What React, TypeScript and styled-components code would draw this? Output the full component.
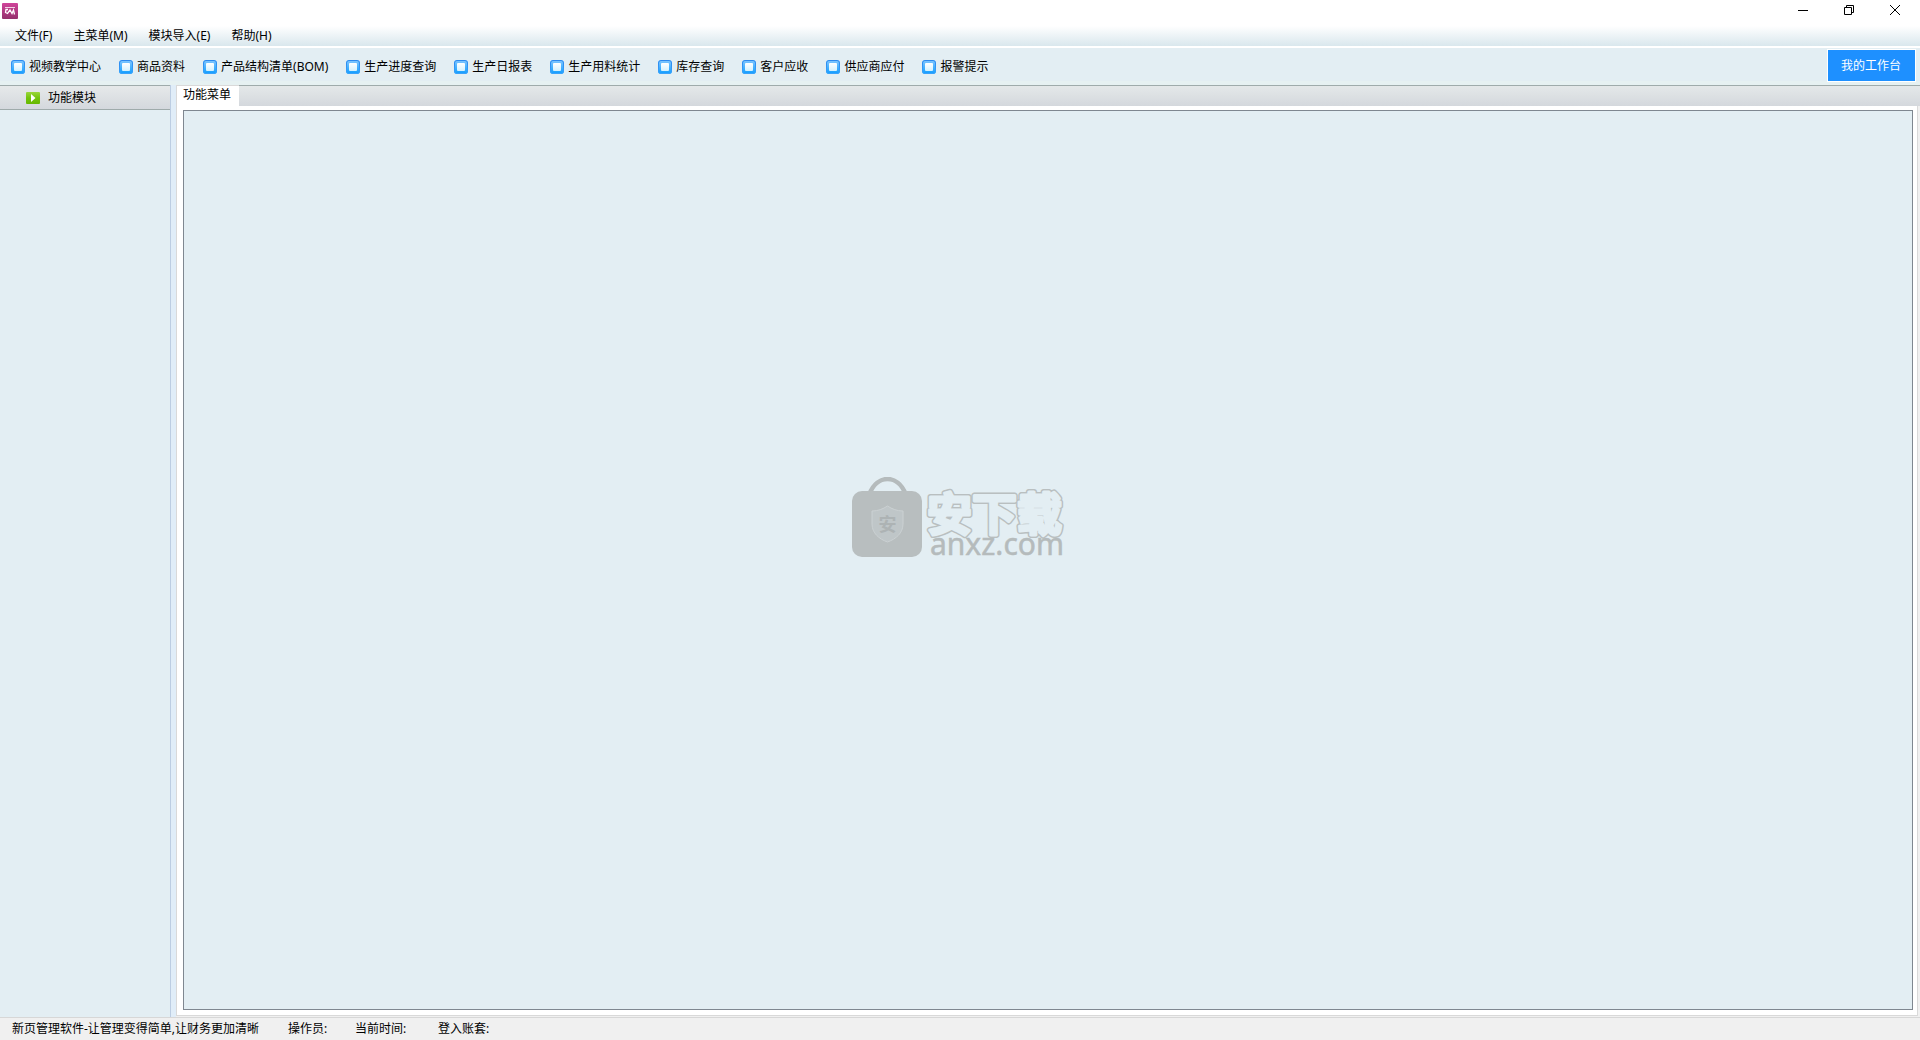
import React from "react";
import styled, { createGlobalStyle } from "styled-components";

const Global = createGlobalStyle`
  * { box-sizing: border-box; }
  body {
    margin: 0;
    background: #f0f0f0;
    color: #000;
    font-family: "Noto Sans", "Noto Sans CJK SC", sans-serif;
    font-size: 12px;
    line-height: 16px;
  }
  button { font: inherit; color: inherit; border: 0; padding: 0; background: none; cursor: default; }
`;

const Shell = styled.div`
  display: flex;
  flex-direction: column;
  height: 100vh;
`;

const TitleBar = styled.header`
  display: flex;
  justify-content: space-between;
  height: 26px;
  padding: 0 2px;
  background: #fff;
`;

const Logo = styled.svg`
  width: 16px;
  height: 16px;
  margin-top: 3px;
`;

const WindowButtons = styled.div`
  display: flex;
`;

const WindowButton = styled.button`
  display: flex;
  align-items: center;
  justify-content: center;
  width: 46px;
  height: 20px;
`;

const MenuBar = styled.nav`
  display: flex;
  align-items: center;
  gap: 21px;
  height: 20px;
  padding: 0 15px;
  background: linear-gradient(#fff, #d9e7ed);
`;

const MenuItem = styled.button`
  white-space: nowrap;
`;

const Toolbar = styled.div`
  display: flex;
  align-items: center;
  justify-content: space-between;
  height: 39px;
  padding: 1px 4px 0 11px;
  border-top: 2px solid #fff;
  background: linear-gradient(#e3eef3 88%, #e6f1f2 88%);
`;

const ToolList = styled.div`
  display: flex;
  gap: 18px;
`;

const Tool = styled.button`
  display: flex;
  align-items: center;
  gap: 4px;
  white-space: nowrap;
`;

const WorkbenchButton = styled.button`
  align-self: flex-start;
  height: 33px;
  padding: 0 14px 0 13px;
  border: 1px solid #fff;
  background: #1e90ff;
  color: #fff;
`;

const Body = styled.div`
  display: flex;
  flex: 1;
  min-height: 0;
`;

const Sidebar = styled.aside`
  width: 170px;
  background: #e3eef3;
`;

const ModuleHeader = styled.button`
  display: flex;
  align-items: center;
  gap: 8px;
  width: 100%;
  height: 25px;
  padding-left: 26px;
  border-top: 1px solid #9fabab;
  border-bottom: 1px solid #9fabab;
  background: linear-gradient(#e6e9ea, #d4d8dd);
`;

const Splitter = styled.div`
  width: 6px;
  border-left: 1px solid #bccde2;
  background: #e0edf8;
`;

const Workspace = styled.main`
  display: flex;
  flex-direction: column;
  flex: 1;
  margin: 0 2px 1px 0;
  border: 1px solid #d9d9d9;
  border-top: 0;
  background: #fff;
`;

const TabStrip = styled.div`
  display: flex;
  height: 21px;
  margin-right: -3px;
  border-top: 1px solid #9fabab;
  background: linear-gradient(#e4e8e9, #d4d8dd);
`;

const Tab = styled.button`
  height: 21px;
  margin-top: -1px;
  padding: 0 8px 2px 6px;
  border-top: 1px solid #d9d9d9;
  background: #fff;
`;

const Canvas = styled.section`
  display: flex;
  align-items: center;
  justify-content: center;
  flex: 1;
  margin: 4px 4px 5px 6px;
  padding-right: 172px;
  padding-bottom: 80px;
  border: 1px solid #7f8790;
  background: #e3eef3;
`;

const StatusBar = styled.footer`
  display: grid;
  grid-template-columns: 276px 67px 83px auto;
  align-items: center;
  height: 23px;
  padding: 0 12px;
  border-top: 1px solid #d7d7d7;
  white-space: nowrap;
`;

const menus = ["文件(F)", "主菜单(M)", "模块导入(E)", "帮助(H)"];
const tools = [
  "视频教学中心",
  "商品资料",
  "产品结构清单(BOM)",
  "生产进度查询",
  "生产日报表",
  "生产用料统计",
  "库存查询",
  "客户应收",
  "供应商应付",
  "报警提示",
];
const statuses = ["新页管理软件-让管理变得简单,让财务更加清晰", "操作员:", "当前时间:", "登入账套:"];

const ToolIcon = () => (
  <svg width="14" height="14" viewBox="0 0 14 14" aria-hidden="true">
    <rect width="14" height="14" rx="3" fill="url(#toolFrame)" />
    <rect x=".5" y=".5" width="13" height="13" rx="2.5" fill="none" stroke="url(#toolEdge)" />
    <rect x="3" y="3" width="8" height="8" rx="1" fill="url(#toolFace)" />
  </svg>
);

const Gradients = () => (
  <svg width="0" height="0" style={{ position: "absolute" }} aria-hidden="true">
    <defs>
      <linearGradient id="toolFrame" x2="0" y2="1">
        <stop stopColor="#84c8ff" />
        <stop offset="1" stopColor="#0f9cff" />
      </linearGradient>
      <linearGradient id="toolEdge" x2="0" y2="1">
        <stop stopColor="#2b88ee" />
        <stop offset="1" stopColor="#3aa2fb" />
      </linearGradient>
      <linearGradient id="toolFace" x2="0" y2="1">
        <stop stopColor="#fff" />
        <stop offset="1" stopColor="#d2f1ff" />
      </linearGradient>
      <linearGradient id="logoFill" x2="0" y2="1">
        <stop stopColor="#d0449a" />
        <stop offset="1" stopColor="#94306c" />
      </linearGradient>
      <linearGradient id="playFill" x2="0" y2="1">
        <stop stopColor="#9ad63c" />
        <stop offset=".5" stopColor="#73c40c" />
        <stop offset="1" stopColor="#66b800" />
      </linearGradient>
    </defs>
  </svg>
);

const Watermark = () => (
  <svg width="220" height="86" viewBox="0 0 220 86" role="img" aria-label="安下载 anxz.com">
    <path d="M17.500 17C25 -3 46 -3 53.500 17" fill="none" stroke="#b5bbbc" strokeWidth="4.500" />
    <rect y="14" width="70" height="66" rx="10" fill="#b8bebf" />
    <path
      d="M35.500 29C40 32 45 34 51 34V47C51 56 44 62 35.500 65C27 62 20 56 20 47V34C26 34 31 32 35.500 29Z"
      fill="#bfc6c8"
      stroke="#cbd1d3"
    />
    <text x="35.500" y="54" textAnchor="middle" fontSize="18" fontWeight="700" fill="#adb3b4" fontFamily="Noto Sans CJK SC, sans-serif">
      安
    </text>
    <defs>
      <text id="brandText" x="75" y="54" fontSize="45" fontFamily="Noto Sans CJK SC, sans-serif" fontWeight="700">
        安下载
      </text>
    </defs>
    <g strokeLinejoin="round" strokeLinecap="round">
      <use href="#brandText" fill="#b9bfc0" stroke="#b9bfc0" strokeWidth="6" />
      <use href="#brandText" fill="#e3eef3" stroke="#e3eef3" strokeWidth="3" />
    </g>
    <text x="78" y="78" fontSize="30" fill="#b5bbbc" stroke="#b5bbbc" strokeWidth=".5" fontFamily="Noto Sans, sans-serif">
      anxz.com
    </text>
  </svg>
);

export default function App() {
  return (
    <Shell>
      <Global />
      <Gradients />
      <TitleBar>
        <Logo viewBox="0 0 16 16" aria-hidden="true">
          <rect width="16" height="16" rx="1" fill="url(#logoFill)" />
          <path d="M3 4.500H13" stroke="#f3d3e5" />
          <path d="M6 6.500H4L3.500 9.500L5.500 10.500L8 7L10 10.500L11.500 7L12.500 11.500" fill="none" stroke="#fff" strokeWidth="1.300" />
        </Logo>
        <WindowButtons>
          <WindowButton aria-label="最小化">
            <svg width="10" height="10" viewBox="0 0 10 10">
              <path d="M0 5.500H10" stroke="#000" />
            </svg>
          </WindowButton>
          <WindowButton aria-label="还原">
            <svg width="10" height="10" viewBox="0 0 10 10" fill="none" stroke="#000">
              <path d="M.5 2.500H7.500V9.500H.5ZM2.500 2.500V.5H9.500V7.500H7.500" />
            </svg>
          </WindowButton>
          <WindowButton aria-label="关闭">
            <svg width="10" height="10" viewBox="0 0 10 10" stroke="#000">
              <path d="M0 0L10 10M10 0L0 10" />
            </svg>
          </WindowButton>
        </WindowButtons>
      </TitleBar>
      <MenuBar>
        {menus.map((m) => (
          <MenuItem key={m}>{m}</MenuItem>
        ))}
      </MenuBar>
      <Toolbar>
        <ToolList>
          {tools.map((t) => (
            <Tool key={t}>
              <ToolIcon />
              {t}
            </Tool>
          ))}
        </ToolList>
        <WorkbenchButton>我的工作台</WorkbenchButton>
      </Toolbar>
      <Body>
        <Sidebar>
          <ModuleHeader>
            <svg width="14" height="12" viewBox="0 0 14 12" aria-hidden="true">
              <rect width="14" height="12" rx="1" fill="url(#playFill)" />
              <path d="M5 2L9.500 6L5 10Z" fill="#fff" />
            </svg>
            功能模块
          </ModuleHeader>
        </Sidebar>
        <Splitter />
        <Workspace>
          <TabStrip role="tablist">
            <Tab role="tab" aria-selected="true">
              功能菜单
            </Tab>
          </TabStrip>
          <Canvas>
            <Watermark />
          </Canvas>
        </Workspace>
      </Body>
      <StatusBar>
        {statuses.map((s) => (
          <span key={s}>{s}</span>
        ))}
      </StatusBar>
    </Shell>
  );
}
